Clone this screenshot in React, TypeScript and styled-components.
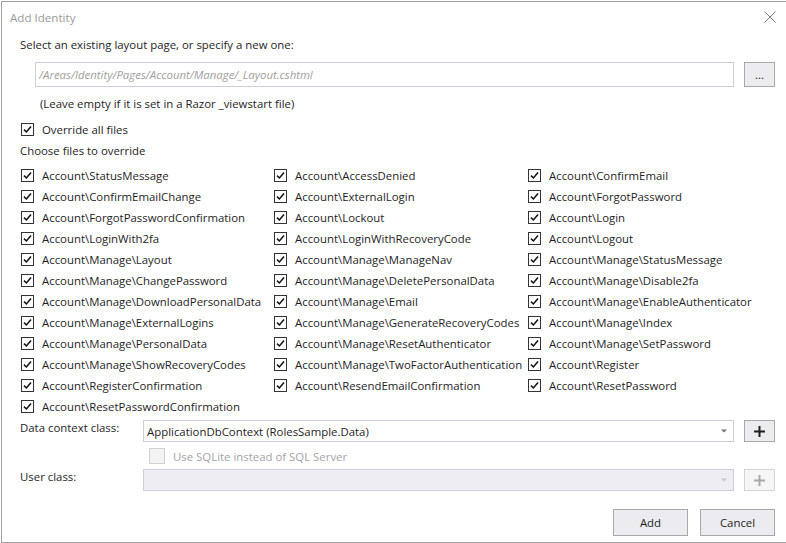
import React from "react";
import styled, { createGlobalStyle } from "styled-components";

const GlobalStyle = createGlobalStyle`
  html, body {
    margin: 0;
    padding: 0;
    background: #ffffff;
  }
  body {
    font-family: "Open Sans", "Noto Sans", sans-serif;
    font-size: 11.4px;
    color: #1e1e1e;
  }
`;

const Dialog = styled.div`
  box-sizing: border-box;
  width: 785px;
  height: 542px;
  margin: 1px 0 0 1px;
  border: 1px solid #a0a0a0;
  border-right: none;
  display: flex;
  flex-direction: column;
  background: #fff;
`;

const TitleBar = styled.div`
  height: 30px;
  display: flex;
  align-items: center;
  justify-content: space-between;
  padding: 0 9px 0 8px;
`;

const Title = styled.span`
  color: #9a9a9a;
  font-size: 11.6px;
`;

const CloseButton = styled.button`
  border: none;
  background: none;
  padding: 0;
  width: 14px;
  height: 14px;
  display: flex;
  align-items: center;
  justify-content: center;
`;

const Body = styled.div`
  flex: 1;
  display: flex;
  flex-direction: column;
  padding: 0 11px 0 18px;
`;

const Text = styled.div<{ $top?: number; $indent?: number }>`
  line-height: 20px;
  margin-top: ${(p) => p.$top ?? 0}px;
  margin-left: ${(p) => p.$indent ?? 0}px;
  white-space: nowrap;
`;

const PathRow = styled.div`
  display: flex;
  gap: 10px;
  margin: 7px 0 0 15px;
  height: 25px;
`;

const PathInput = styled.input`
  flex: 1;
  box-sizing: border-box;
  height: 25px;
  border: 1px solid #cccedb;
  padding: 0 3px;
  font-family: inherit;
  font-size: 11.4px;
  font-style: italic;
  outline: none;
  &::placeholder {
    color: #a0a0a0;
  }
`;

const DialogButton = styled.button<{ $w: number; $h: number; $disabled?: boolean }>`
  box-sizing: border-box;
  width: ${(p) => p.$w}px;
  height: ${(p) => p.$h}px;
  flex: none;
  border: 1px solid ${(p) => (p.$disabled ? "#d4d4d4" : "#a8a8a8")};
  background: ${(p) => (p.$disabled ? "#f6f6f6" : "#ececf0")};
  color: #1e1e1e;
  font-family: inherit;
  font-size: 11.4px;
  padding: 0;
  display: flex;
  align-items: center;
  justify-content: center;
`;

const CheckRow = styled.label<{ $top?: number; $clip?: number }>`
  display: flex;
  align-items: center;
  height: 21px;
  margin-top: ${(p) => p.$top ?? 0}px;
  margin-right: ${(p) => p.$clip ?? 0}px;
  white-space: nowrap;
  overflow: hidden;
`;

const Box = styled.span<{ $disabled?: boolean; $size?: number }>`
  box-sizing: border-box;
  flex: none;
  width: ${(p) => p.$size ?? 13}px;
  height: ${(p) => p.$size ?? 13}px;
  margin-left: 1px;
  margin-right: 8px;
  border: 1px solid ${(p) => (p.$disabled ? "#d0d0d0" : "#333333")};
  background: ${(p) => (p.$disabled ? "#f3f3f3" : "#fff")};
  display: flex;
  align-items: center;
  justify-content: center;
`;

const DisabledText = styled.span`
  color: #a2a4a5;
`;

const FileGrid = styled.div`
  display: grid;
  grid-template-columns: 253px 254px 1fr;
  grid-auto-rows: 21px;
  margin-top: 4px;
`;

const FormRow = styled.div<{ $top: number }>`
  display: flex;
  align-items: flex-start;
  margin-top: ${(p) => p.$top}px;
`;

const FieldLabel = styled.div`
  width: 123px;
  flex: none;
  line-height: 16px;
`;

const Combo = styled.div<{ $disabled?: boolean }>`
  box-sizing: border-box;
  width: 591px;
  height: 22px;
  margin-right: 10px;
  border: 1px solid #cccedb;
  background: ${(p) => (p.$disabled ? "#eeeef2" : "#fff")};
  display: flex;
  align-items: center;
  justify-content: space-between;
  padding: 0 6px 0 3px;
`;

const SubRow = styled.div`
  display: flex;
  align-items: center;
  height: 18px;
  margin: 5px 0 0 128px;
`;

const Footer = styled.div`
  display: flex;
  justify-content: flex-end;
  gap: 12px;
  margin-top: 18px;
`;

const Check = () => (
  <svg width="9" height="9" viewBox="0 0 9 9">
    <path d="M1 4.6 L3.4 7 L8 1.4" fill="none" stroke="#111" strokeWidth="1.5" />
  </svg>
);

const Arrow = ({ color }: { color: string }) => (
  <svg width="6" height="4" viewBox="0 0 6 4">
    <path d="M0 0.5 H6 L3 3.5 Z" fill={color} />
  </svg>
);

const Plus = ({ color }: { color: string }) => (
  <svg width="11" height="11" viewBox="0 0 11 11">
    <path d="M5.5 0 V11 M0 5.5 H11" stroke={color} strokeWidth="2" />
  </svg>
);

const files = [
  "StatusMessage", "AccessDenied", "ConfirmEmail",
  "ConfirmEmailChange", "ExternalLogin", "ForgotPassword",
  "ForgotPasswordConfirmation", "Lockout", "Login",
  "LoginWith2fa", "LoginWithRecoveryCode", "Logout",
  "Manage\\Layout", "Manage\\ManageNav", "Manage\\StatusMessage",
  "Manage\\ChangePassword", "Manage\\DeletePersonalData", "Manage\\Disable2fa",
  "Manage\\DownloadPersonalData", "Manage\\Email", "Manage\\EnableAuthenticator",
  "Manage\\ExternalLogins", "Manage\\GenerateRecoveryCodes", "Manage\\Index",
  "Manage\\PersonalData", "Manage\\ResetAuthenticator", "Manage\\SetPassword",
  "Manage\\ShowRecoveryCodes", "Manage\\TwoFactorAuthentication", "Register",
  "RegisterConfirmation", "ResendEmailConfirmation", "ResetPassword",
  "ResetPasswordConfirmation",
];

export default function App() {
  return (
    <>
      <GlobalStyle />
      <Dialog>
        <TitleBar>
          <Title>Add Identity</Title>
          <CloseButton aria-label="Close">
            <svg width="12" height="12" viewBox="0 0 12 12">
              <path d="M0.5 0.5 L11.5 11.5 M11.5 0.5 L0.5 11.5" stroke="#7a7a7a" strokeWidth="1" />
            </svg>
          </CloseButton>
        </TitleBar>
        <Body>
          <Text $top={3}>Select an existing layout page, or specify a new one:</Text>
          <PathRow>
            <PathInput placeholder="/Areas/Identity/Pages/Account/Manage/_Layout.cshtml" />
            <DialogButton $w={31} $h={25}>...</DialogButton>
          </PathRow>
          <Text $top={7} $indent={20}>(Leave empty if it is set in a Razor _viewstart file)</Text>
          <CheckRow $top={5}>
            <Box><Check /></Box>
            Override all files
          </CheckRow>
          <CheckRow>Choose files to override</CheckRow>
          <FileGrid>
            {files.map((f) => (
              <CheckRow key={f} $clip={5}>
                <Box><Check /></Box>
                Account\{f}
              </CheckRow>
            ))}
          </FileGrid>
          <FormRow $top={3}>
            <FieldLabel>Data context class:</FieldLabel>
            <Combo>
              <span>ApplicationDbContext (RolesSample.Data)</span>
              <Arrow color="#717171" />
            </Combo>
            <DialogButton $w={31} $h={22}><Plus color="#1e1e1e" /></DialogButton>
          </FormRow>
          <SubRow>
            <Box $disabled $size={16} />
            <DisabledText>Use SQLite instead of SQL Server</DisabledText>
          </SubRow>
          <FormRow $top={4}>
            <FieldLabel>User class:</FieldLabel>
            <Combo $disabled>
              <span />
              <Arrow color="#c8c8c8" />
            </Combo>
            <DialogButton $w={31} $h={22} $disabled><Plus color="#a8a8a8" /></DialogButton>
          </FormRow>
          <Footer>
            <DialogButton $w={75} $h={27}>Add</DialogButton>
            <DialogButton $w={75} $h={27}>Cancel</DialogButton>
          </Footer>
        </Body>
      </Dialog>
    </>
  );
}
